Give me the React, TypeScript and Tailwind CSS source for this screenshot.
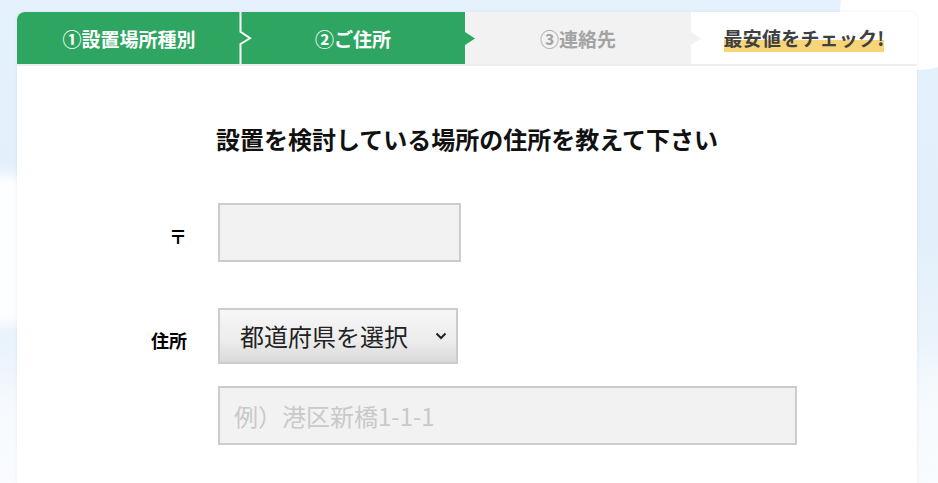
import React from "react";

const font = { fontFamily: '"Noto Sans CJK JP", "Noto Sans", sans-serif' };

export default function App() {
  return (
    <div
      className="relative w-[938px] h-[483px] overflow-hidden bg-[linear-gradient(180deg,#e5f2fd_0%,#e3f0fb_50%,#f3f8fd_100%)]"
      style={font}
    >
      {/* decorative background blobs */}
      <div className="absolute left-[-120px] top-[175px] w-[200px] h-[150px] rounded-full bg-white/90 blur-[6px]" />
      <div className="absolute left-[-60px] top-[380px] w-[120px] h-[140px] rounded-full bg-white/50 blur-[20px]" />
      <div className="absolute left-[840px] top-[-50px] w-[140px] h-[120px] rounded-full bg-white" />
      <div className="absolute left-[880px] top-[360px] w-[140px] h-[160px] rounded-full bg-white/50 blur-[20px]" />

      <div className="relative ml-[17px] mt-[12px] w-[900px] h-[471px] bg-white rounded-t-[8px] shadow-[0_0_4px_rgba(0,0,0,0.06)] overflow-hidden">
        {/* steps */}
        <div className="relative flex h-[54px] border-b-2 border-[#eeeeee] font-bold text-[19px] leading-none">
          <div className="relative flex w-[224px] items-center justify-center bg-[#2ea561] text-white">
            ①設置場所種別
            <svg className="absolute left-[222px] top-0 z-10" width="14" height="52" viewBox="0 0 14 52">
              <polyline
                points="1.5,0 1.5,19.7 11,26.3 1.5,32 1.5,52"
                fill="#2ea561"
                stroke="#ffffff"
                strokeWidth="2"
              />
            </svg>
          </div>
          <div className="relative flex w-[224px] items-center justify-center bg-[#2ea561] text-white">
            ②ご住所
            <svg className="absolute left-[224px] top-[20px] z-10" width="10" height="13" viewBox="0 0 10 13">
              <polygon points="0,0 10,6.5 0,13" fill="#2ea561" />
            </svg>
          </div>
          <div className="relative flex w-[226px] items-center justify-center bg-[#f2f2f2] text-[#a3a3a3]">
            ③連絡先
            <svg className="absolute left-[226px] top-[20px] z-10" width="10" height="13" viewBox="0 0 10 13">
              <polygon points="0,0 10,6.5 0,13" fill="#f2f2f2" />
            </svg>
          </div>
          <div className="flex w-[226px] items-center justify-center bg-white text-[#404040]">
            <span className="mt-[4px] pb-[5px] leading-[19px] tracking-[0.2px] bg-[linear-gradient(180deg,transparent_50%,#f6d579_50%)]">
              最安値をチェック!
            </span>
          </div>
        </div>

        {/* form */}
        <div className="pt-[55px]">
          <h2 className="text-center text-[24px] leading-[36px] font-bold text-[#111]">
            設置を検討している場所の住所を教えて下さい
          </h2>

          <div className="mt-[46px] flex items-center">
            <div className="w-[170px] mt-[8px] text-right text-[18px] font-bold text-black">〒</div>
            <div className="ml-[31px] w-[243px] h-[59px] border-2 border-[#cccccc] bg-[#f2f2f2]" />
          </div>

          <div className="mt-[46px] flex items-center">
            <div className="w-[170px] mt-[8px] text-right text-[18px] font-bold text-black">住所</div>
            <div className="ml-[31px] flex w-[240px] h-[56px] items-center justify-between border-2 border-[#cccccc] bg-[linear-gradient(180deg,#f7f7f7_0%,#ececec_60%,#d9d9d9_100%)] pl-[20px] pr-[9px]">
              <span className="text-[24px] text-[#222]">都道府県を選択</span>
              <svg width="12" height="8" viewBox="0 0 12 8">
                <polyline points="1.5,1.5 6,6 10.5,1.5" fill="none" stroke="#222" strokeWidth="2" />
              </svg>
            </div>
          </div>

          <div className="mt-[22px] ml-[201px] flex w-[579px] h-[59px] items-center border-2 border-[#cccccc] bg-[#f2f2f2] pl-[14px]">
            <span className="text-[24px] text-[#c9c9c9]">例）港区新橋1-1-1</span>
          </div>
        </div>
      </div>
    </div>
  );
}
